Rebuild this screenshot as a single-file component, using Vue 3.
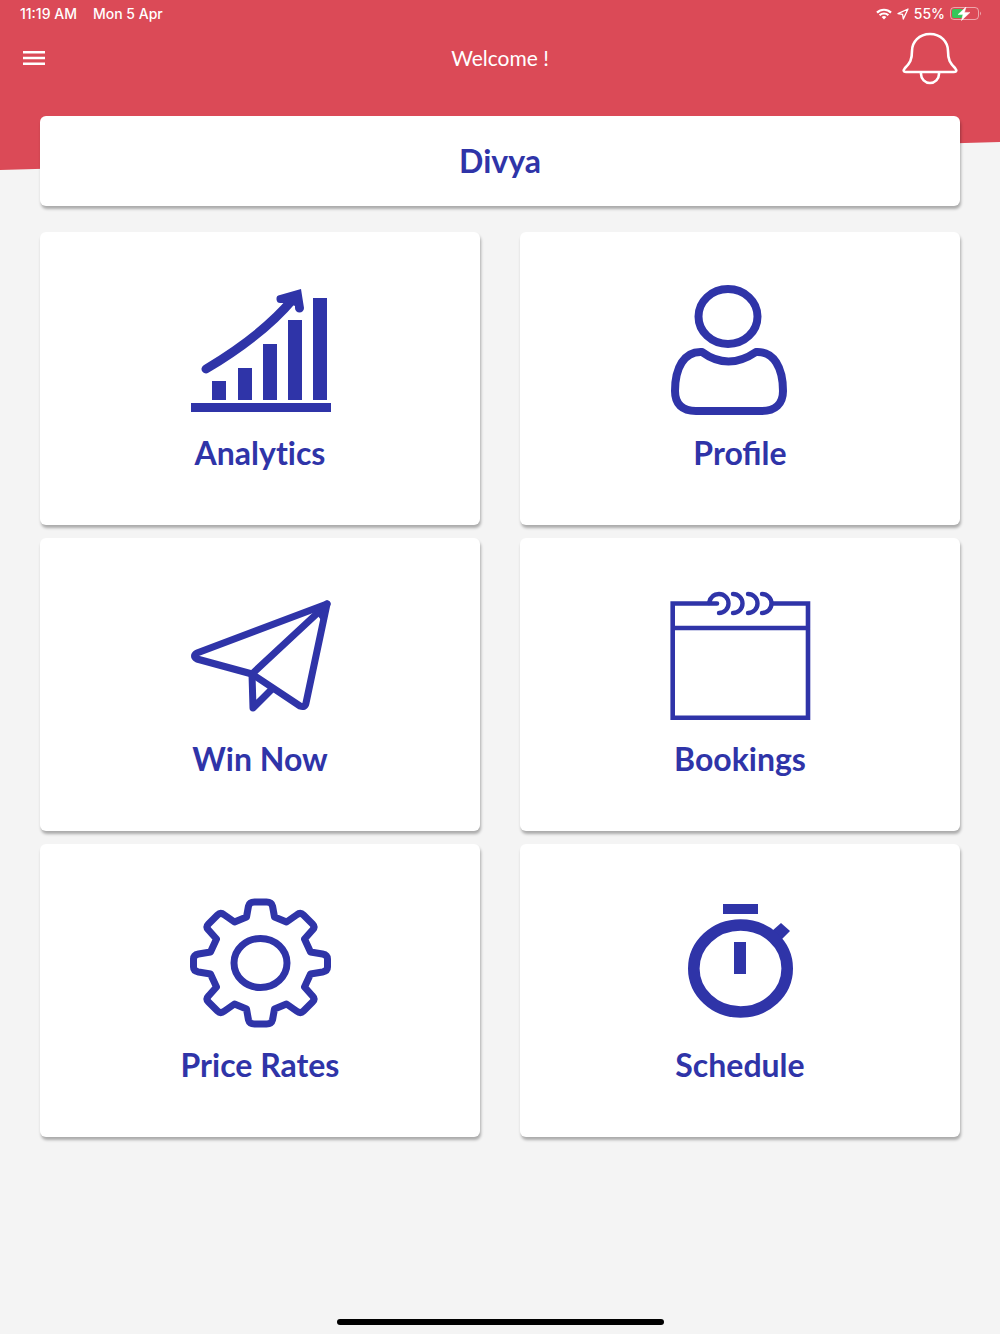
<template>
  <div class="home-page">
    <header class="page-header">
      <div class="status-bar">
        <div class="status-left">
          <span>11:19 AM</span>
          <span>Mon 5 Apr</span>
        </div>
        <div class="status-right">
          <svg width="16" height="12" viewBox="0 0 16 12" fill="none" stroke="#fff" stroke-width="2.2">
            <path d="M1 4.6a10 10 0 0 1 14 0M3.6 7.3a6.3 6.3 0 0 1 8.8 0" />
            <path d="M8 11.5L5.6 9.1a3.5 3.5 0 0 1 4.8 0z" fill="#fff" stroke="none" />
          </svg>
          <svg class="location" width="12" height="12" viewBox="0 0 12 12" fill="none" stroke="#fff" stroke-width="1.3" stroke-linejoin="round">
            <path d="M11 1L1 5.6l4.6.8.7 4.6z" />
          </svg>
          <span>55%</span>
          <svg class="battery" width="32" height="14" viewBox="0 0 32 14">
            <rect x="0.5" y="0.5" width="28" height="12" rx="3.5" fill="none" stroke="#fff" stroke-opacity="0.5" />
            <path d="M30 4.5q2 2 0 4z" fill="#fff" fill-opacity="0.5" />
            <rect x="2" y="2" width="11" height="9" rx="2" fill="#34c759" />
            <path d="M16 0L8 7.600h5L11.500 13.500L20 5.400h-5.500z" fill="#fff" stroke="#fff" stroke-width="0.5" />
          </svg>
        </div>
      </div>

      <nav class="nav-bar">
        <button class="icon-btn" aria-label="Menu">
          <svg width="22" height="16" viewBox="0 0 22 16" fill="#fff">
            <path d="M0 1h22v2.500H0zM0 6.800h22v2.500H0zM0 12.500h22V15H0z" />
          </svg>
        </button>
        <h1>Welcome !</h1>
        <button class="icon-btn bell" aria-label="Notifications">
          <svg width="56" height="54" viewBox="0 0 56 54" fill="none" stroke="#fff" stroke-width="2.6">
            <path d="M28 3C17 3 10 11 10 20C10 29 8 32 3 37Q0 41 4 41H52Q56 41 53 37C48 32 46 29 46 20C46 11 39 3 28 3Z" />
            <path d="M19 41v2a9 9 0 0 0 18 0v-2" />
          </svg>
        </button>
      </nav>
    </header>

    <main class="content">
      <div class="name-card">{{ userName }}</div>

      <div class="menu-grid">
        <button class="menu-card" v-for="item in menuItems" :key="item.id">
          <svg v-if="item.id === 'analytics'" class="menu-icon filled" viewBox="0 0 144 132">
            <path d="M24 97h14v19H24zM50 84h14v32H50zM75 60h14v56H75zM100 36h14v80H100zM125 14h14v102H125zM3 119h140v9H3z" />
            <path class="trend" d="M18 85Q75 51 105 15" />
            <path d="M113 5L92 11a4 4 0 0 0 1 8L100 19L107 22V24a4.500 4.500 0 0 0 9 0Z" />
          </svg>

          <svg v-else-if="item.id === 'profile'" class="menu-icon outlined thick" viewBox="0 0 144 132">
            <ellipse cx="60" cy="32.500" rx="29.500" ry="27.500" />
            <path d="M34 68Q60 87 88 68C106 67 115 84 115 107C115 120 107 127 94 127H28C14 127 7 120 7 107C7 84 16 67 34 68Z" />
          </svg>

          <svg v-else-if="item.id === 'win'" class="menu-icon outlined" viewBox="0 0 144 132">
            <path d="M139 14L9 63Q4 66 9 69L64 84L112 116Q117 118 118 113Z" />
            <path d="M139 14L136 17L64 84L65 118L84 99" />
            <path class="fold" d="M139 14L128 20L134 28Z" />
          </svg>

          <svg v-else-if="item.id === 'bookings'" class="menu-icon outlined thin" viewBox="0 0 144 132">
            <path class="frame" d="M49 13.500H4.700V127.700H140V13.500H105M4.700 38H140" />
            <path d="M41 13Q43 4 51 4A9.500 9.500 0 0 1 51 23" />
            <path d="M65 4A9.500 9.500 0 0 1 65 23M80 4A9.500 9.500 0 0 1 80 23M94 4A9.500 9.500 0 0 1 94 23" />
          </svg>

          <svg v-else-if="item.id === 'rates'" class="menu-icon outlined" viewBox="0 0 144 132">
            <g transform="translate(72.5 67)">
              <ellipse rx="26.500" ry="24.500" />
              <path
                d="M-6 -61H6Q11 -61 12 -57L14 -46L26 -41L36 -48Q40 -51 43 -48L52 -39Q55 -36 52 -33L44 -24L50 -11L62 -9Q67 -8 67 -4V4Q67 8 62 9L50 11L44 24L52 33Q55 36 52 39L43 48Q40 51 36 48L26 41L14 46L12 57Q11 61 6 61H-6Q-11 61 -12 57L-14 46L-26 41L-36 48Q-40 51 -43 48L-52 39Q-55 36 -52 33L-44 24L-50 11L-62 9Q-67 8 -67 4V-4Q-67 -8 -62 -9L-50 -11L-44 -24L-52 -33Q-55 -36 -52 -39L-43 -48Q-40 -51 -36 -48L-26 -41L-14 -46L-12 -57Q-11 -61 -6 -61Z"
              />
            </g>
          </svg>

          <svg v-else class="menu-icon filled" viewBox="0 0 144 132">
            <path d="M55 8h35v10H55zM66 46h12v32H66zM113 27l9 8l-9 9l-9 -9z" />
            <ellipse class="dial" cx="72.500" cy="72.500" rx="46.700" ry="43.500" />
          </svg>

          <span class="menu-label">{{ item.label }}</span>
        </button>
      </div>
    </main>

    <div class="home-indicator"></div>
  </div>
</template>

<script setup>
import { ref } from 'vue'

const userName = ref('Divya')

// \u200C keeps Lato from joining the "ti" pair
const menuItems = ref([
  { id: 'analytics', label: 'Analyt\u200Cics' },
  { id: 'profile', label: 'Profile' },
  { id: 'win', label: 'Win Now' },
  { id: 'bookings', label: 'Bookings' },
  { id: 'rates', label: 'Price Rates' },
  { id: 'schedule', label: 'Schedule' }
])
</script>

<style>
body {
  margin: 0;
  background: #f4f4f4;
}
</style>

<style scoped>
.home-page {
  min-height: 100vh;
  display: flex;
  flex-direction: column;
  box-sizing: border-box;
  padding-bottom: 9px;
  background: #f4f4f4;
  font-family: Lato, sans-serif;
}

/* slanted bottom edge */
.page-header {
  background: #db4a57;
  color: white;
  padding-bottom: 82px;
  clip-path: polygon(0 0, 100% 0, 100% calc(100% - 28px), 0 100%);
}

.status-bar {
  display: flex;
  justify-content: space-between;
  align-items: center;
  height: 28px;
  padding: 0 18px 0 20px;
  font-family: Inter, sans-serif;
  font-size: 14px;
  line-height: 18px;
  font-weight: 500;
}

.status-left {
  display: flex;
  gap: 16px;
}

.status-right {
  display: flex;
  align-items: center;
  gap: 5px;
}

.nav-bar {
  display: grid;
  grid-template-columns: 1fr auto 1fr;
  align-items: center;
  height: 60px;
  padding: 0 23px;
}

.nav-bar h1 {
  margin: 0;
  font-size: 21px;
  line-height: 24px;
  font-weight: 400;
}

.icon-btn {
  display: flex;
  justify-self: start;
  padding: 0;
  border: none;
  background: none;
  cursor: pointer;
}

.icon-btn.bell {
  justify-self: end;
  margin-right: 19px;
}

.content {
  margin-top: -54px;
  padding: 0 40px;
  position: relative;
}

.name-card,
.menu-card {
  background: white;
  border-radius: 6px;
  box-shadow: 1px 3px 3px rgba(0, 0, 0, 0.3);
  color: #2f34a8;
  font-size: 32px;
  line-height: 36px;
  font-weight: 700;
}

.name-card {
  padding: 27px 16px;
  margin-bottom: 26px;
  text-align: center;
}

.menu-grid {
  display: grid;
  grid-template-columns: 1fr 1fr;
  gap: 13px 40px;
}

.menu-card {
  display: flex;
  flex-direction: column;
  align-items: center;
  gap: 19px;
  padding: 52px 16px 54px;
  border: none;
  font-family: inherit;
  cursor: pointer;
}

.menu-icon {
  width: 144px;
  height: 132px;
}

.filled {
  fill: #2f34a8;
}

.outlined {
  fill: none;
  stroke: #2f34a8;
  stroke-width: 7;
  stroke-linecap: round;
  stroke-linejoin: round;
}

.outlined.thick {
  stroke-width: 8;
}

.outlined.thin {
  stroke-width: 4.4;
}

.frame {
  stroke-width: 4.6;
  stroke-linejoin: miter;
}

.fold {
  fill: #2f34a8;
  stroke-width: 4;
}

.trend {
  fill: none;
  stroke: #2f34a8;
  stroke-width: 9;
  stroke-linecap: round;
}

.dial {
  fill: none;
  stroke: #2f34a8;
  stroke-width: 11.6;
}

.home-indicator {
  width: 33%;
  max-width: 327px;
  height: 6px;
  margin: auto auto 0;
  border-radius: 3px;
  background: black;
}
</style>
